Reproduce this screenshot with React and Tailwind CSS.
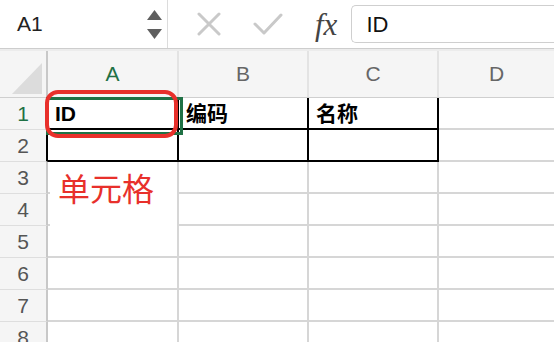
import React from "react";

const FONT = { fontFamily: '"Liberation Sans", "Noto Sans CJK SC", sans-serif' };

function Row({ num, cells, active, black }) {
  return (
    <div className="flex h-[32px] shrink-0">
      <div className={`w-[48px] shrink-0 bg-[#f5f5f5] border-b border-b-[#dedede] border-r-2 ${black ? "border-r-[#000]" : "border-r-[#c8c8c8]"} flex items-center justify-center text-[21px] ${active ? "text-[#1f7145]" : "text-[#555]"}`}>
        {num}
      </div>
      {cells}
    </div>
  );
}

function Cell({ w, black, blackRight, children, last }) {
  return (
    <div
      className={`${w} shrink-0 h-full border-b-2 ${black ? "border-b-[#000]" : "border-b-[#d6d6d6]"} ${last ? "" : "border-r-2"} ${blackRight ? "border-r-[#000]" : "border-r-[#d6d6d6]"} flex items-center pl-[7px] pt-[2px] text-[21px] font-bold text-black`}
    >
      {children}
    </div>
  );
}

export default function App() {
  const rows = [];
  for (let i = 3; i <= 8; i++) {
    rows.push(
      <Row
        key={i}
        num={i}
        cells={
          <>
            <Cell w="w-[131px]" />
            <Cell w="w-[130px]" />
            <Cell w="w-[130px]" />
            <Cell w="flex-1" last />
          </>
        }
      />
    );
  }
  return (
    <div className="relative w-[554px] h-[342px] overflow-hidden bg-white" style={FONT}>
      {/* top bar */}
      <div className="flex h-[48px] items-stretch bg-white">
        <div className="w-[168px] shrink-0 border-r border-r-[#dcdcdc] flex items-center pl-[17px] pr-[3px] relative">
          <span className="text-[21px] text-[#222]">A1</span>
          <div className="ml-auto mr-[0px] flex flex-col items-center gap-[9px] pr-[2px]">
            <svg width="15" height="10" viewBox="0 0 15 10"><polygon points="7.5,0 15,10 0,10" fill="#5f5f5f" /></svg>
            <svg width="15" height="10" viewBox="0 0 15 10"><polygon points="0,0 15,0 7.5,10" fill="#5f5f5f" /></svg>
          </div>
        </div>
        <div className="flex items-center pl-[29px]">
          <svg width="24" height="24" viewBox="0 0 24 24">
            <path d="M2 2 L22 22 M22 2 L2 22" stroke="#c9c9c9" strokeWidth="3" strokeLinecap="round" />
          </svg>
          <svg className="ml-[32px]" width="30" height="24" viewBox="0 0 30 24">
            <path d="M2 12 L11 21 L28 3" stroke="#c9c9c9" strokeWidth="3" fill="none" strokeLinecap="round" strokeLinejoin="round" />
          </svg>
          <span className="ml-[32px] text-[31px] italic text-[#444] leading-none" style={{ fontFamily: '"Liberation Serif", "DejaVu Serif", serif' }}>
            fx
          </span>
        </div>
        <div className="ml-[14px] flex-1 mt-[5px] mb-[5px] border border-[#cfcfcf] border-r-0 rounded-l-[5px] flex items-center pl-[14px] text-[22px] text-[#111]">
          ID
        </div>
      </div>
      <div className="h-[1px] bg-[#cdcdcd]" />
      <div className="h-[2px] bg-[#ececec]" />
      {/* column header */}
      <div className="flex h-[47px] bg-[#f5f5f5] border-b border-b-[#cfcfcf]">
        <div className="w-[48px] shrink-0 border-r-2 border-r-[#c8c8c8] flex items-end justify-end pb-[3px] pr-[4px]">
          <svg width="30" height="31" viewBox="0 0 30 31"><polygon points="30,0 30,31 0,31" fill="#dcdcdc" /></svg>
        </div>
        <div className="w-[131px] shrink-0 border-r-2 border-r-[#e3e3e3] flex items-center justify-center text-[21px] text-[#1f7145]">A</div>
        <div className="w-[130px] shrink-0 border-r-2 border-r-[#e3e3e3] flex items-center justify-center text-[21px] text-[#666]">B</div>
        <div className="w-[130px] shrink-0 border-r-2 border-r-[#e3e3e3] flex items-center justify-center text-[21px] text-[#666]">C</div>
        <div className="flex-1 flex items-center justify-center text-[21px] text-[#666]">D</div>
      </div>
      {/* rows */}
      <Row
        num={1}
        active
        cells={
          <>
            <Cell w="w-[131px]" black blackRight>ID</Cell>
            <Cell w="w-[130px]" black blackRight>编码</Cell>
            <Cell w="w-[130px]" black blackRight>名称</Cell>
            <Cell w="flex-1" last />
          </>
        }
      />
      <Row
        num={2}
        black
        cells={
          <>
            <Cell w="w-[131px]" black blackRight />
            <Cell w="w-[130px]" black blackRight />
            <Cell w="w-[130px]" black blackRight />
            <Cell w="flex-1" last />
          </>
        }
      />
      {rows}

      {/* selection */}
      <div className="absolute left-[46px] top-[97px] w-[137px] h-[38px] border-[3px] border-[#1f7145]" />
      {/* red annotation ring */}
      <div className="absolute left-[45px] top-[90px] w-[133px] h-[48px] border-[4px] border-[#e8302b] rounded-[13px]" />
      {/* text box */}
      <div className="absolute left-[50px] top-[164px] w-[127px] h-[62px] bg-white flex items-start pt-[10px] pl-[8px] text-[32px] text-[#e8302b] leading-none">
        单元格
      </div>
    </div>
  );
}
